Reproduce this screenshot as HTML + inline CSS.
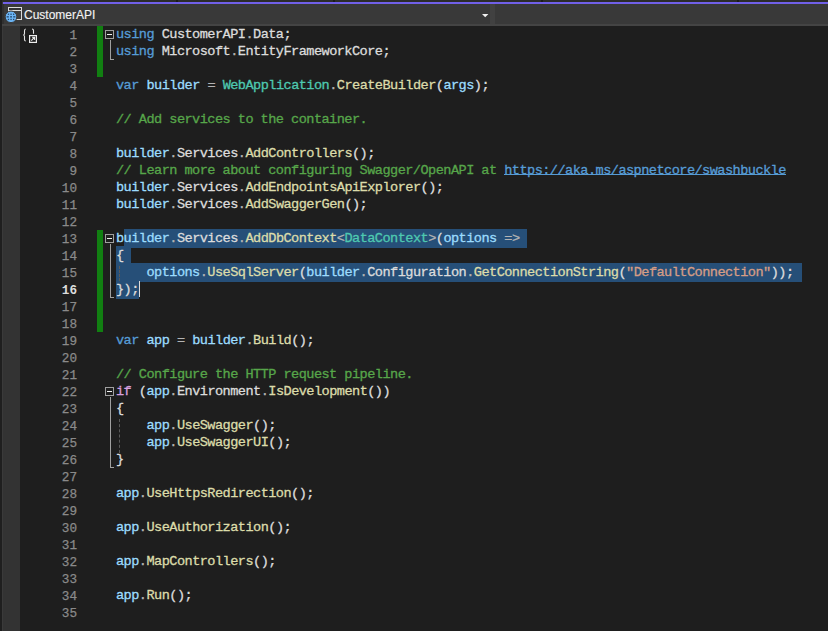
<!DOCTYPE html>
<html><head><meta charset="utf-8"><style>
html,body{margin:0;padding:0;}
body{width:828px;height:631px;position:relative;overflow:hidden;background:#1e1e1e;}
.abs{position:absolute;}
#topstrip{position:absolute;left:0;top:0;width:828px;height:2px;background:#2b2b2b;}
#leftstrip{position:absolute;left:0;top:0;width:2px;height:631px;background:#1f1f1f;}
#nav{position:absolute;left:2px;top:2px;width:826px;height:24px;background:#393939;}
#purple{position:absolute;left:3px;top:2px;width:825px;height:2px;background:#7160e8;}
#navbot{position:absolute;left:2px;top:24px;width:826px;height:2px;background:#444444;}
#sep{position:absolute;left:490px;top:4px;width:5px;height:20px;background:#414141;}
#margin{position:absolute;left:2px;top:26px;width:18px;height:605px;background:#333333;}
.title{position:absolute;left:24px;top:6px;font-family:"Liberation Sans",sans-serif;font-size:12px;line-height:18px;color:#f1f1f1;-webkit-text-stroke-width:0.15px;}
.ln{position:absolute;left:116px;height:17px;line-height:17px;font-family:"Liberation Mono",monospace;font-size:13.6px;letter-spacing:-0.546px;-webkit-text-stroke-width:0.3px;white-space:pre;padding-top:0px;box-sizing:border-box;}
.num{position:absolute;left:40px;width:37px;text-align:right;height:17px;line-height:17px;font-family:"Liberation Mono",monospace;font-size:12.7px;color:#8a8a8a;-webkit-text-stroke:0.25px #8a8a8a;padding-top:1px;box-sizing:border-box;}
.num.cur{color:#dcdcdc;-webkit-text-stroke:0;font-weight:bold;}
.lk{color:#569CD6;}
#ul{position:absolute;left:504px;top:174px;width:282px;height:1px;background:#569cd6;}
.sel{position:absolute;height:19px;background:#264f78;}
.green{position:absolute;left:97px;width:6px;background:#117f11;}
.fold{position:absolute;left:105px;width:7px;height:7px;border:1px solid #a0a0a0;}
.fold::after{content:"";position:absolute;left:1px;top:3px;width:5px;height:1px;background:#f0f0f0;}
.vl{position:absolute;left:110px;width:1px;background:#a0a0a0;}
.hl{position:absolute;left:110px;width:4px;height:1px;background:#a0a0a0;}
.guide{position:absolute;left:119px;width:0;border-left:1px dashed #5a5a5a;}
.tick{position:absolute;top:0;width:2px;height:2px;background:#1a1a1a;}
#caret{position:absolute;left:139px;top:281px;width:1px;height:16px;background:#dcdcdc;}
</style></head><body>
<div id="topstrip"></div>
<div id="nav"></div>
<div id="purple"></div>
<div id="navbot"></div>
<div id="sep"></div>
<div id="leftstrip"></div><div class="tick" style="left:176px"></div><div class="tick" style="left:333px"></div><div class="tick" style="left:541px"></div><div class="tick" style="left:737px"></div>
<svg class="abs" style="left:0;top:0" width="40" height="26" viewBox="0 0 40 26">
  <rect x="8.5" y="7.5" width="13" height="12" fill="#3f3f3f" stroke="#dcdcdc" stroke-width="1"/>
  <line x1="8.5" y1="10.5" x2="21.5" y2="10.5" stroke="#dcdcdc" stroke-width="1"/>
  <rect x="9" y="8" width="12" height="2" fill="#353535"/>
  <circle cx="11" cy="16.8" r="5.8" fill="#6cb6f7" stroke="#3b3b3b" stroke-width="1"/>
  <g fill="#24476b">
   <rect x="7.8" y="13.6" width="1.3" height="1.3"/><rect x="10.4" y="13.6" width="1.3" height="1.3"/><rect x="13" y="13.6" width="1.3" height="1.3"/>
   <rect x="6.6" y="16.2" width="2.2" height="1.3"/><rect x="10.1" y="16.2" width="1.9" height="1.3"/><rect x="13.2" y="16.2" width="2.2" height="1.3"/>
   <rect x="7.8" y="18.8" width="1.3" height="1.3"/><rect x="10.4" y="18.8" width="1.3" height="1.3"/><rect x="13" y="18.8" width="1.3" height="1.3"/>
  </g>
</svg>
<div class="title">CustomerAPI</div>
<svg class="abs" style="left:482px;top:13px" width="7" height="5" viewBox="0 0 7 5"><path d="M0 1H6.4L3.2 4.2Z" fill="#f0f0f0"/></svg>
<div id="margin"></div><div class="abs" style="left:2px;top:26px;width:1px;height:605px;background:#3a3a3a"></div><div class="abs" style="left:2px;top:4px;width:2px;height:20px;background:#303030"></div>
<svg class="abs" style="left:20px;top:26px" width="20" height="20" viewBox="0 0 20 20">
  <path d="M5.8 3 C4.7 3 4.5 3.8 4.5 5 V7.6 C4.5 8.6 4.1 9 3.2 9 C4.1 9 4.5 9.4 4.5 10.4 V13.4 C4.5 14.5 4.8 15 5.8 15" fill="none" stroke="#e6e6e6" stroke-width="1.1"/>
  <path d="M12 3 C13.1 3 13.5 3.5 13.5 4.6 V7.7" fill="none" stroke="#e6e6e6" stroke-width="1.1"/>
  <rect x="9.6" y="9.6" width="6.8" height="6.8" fill="#1e1e1e" stroke="#ececec" stroke-width="1.2"/>
  <path d="M11.3 14.6 L14.4 11.5 M12 11.3 H14.6 V13.9" fill="none" stroke="#e8e8e8" stroke-width="1.1"/>
</svg>
<div class="num" style="top:26px">1</div><div class="num" style="top:43px">2</div><div class="num" style="top:60px">3</div><div class="num" style="top:77px">4</div><div class="num" style="top:94px">5</div><div class="num" style="top:111px">6</div><div class="num" style="top:128px">7</div><div class="num" style="top:145px">8</div><div class="num" style="top:162px">9</div><div class="num" style="top:179px">10</div><div class="num" style="top:196px">11</div><div class="num" style="top:213px">12</div><div class="num" style="top:230px">13</div><div class="num" style="top:247px">14</div><div class="num" style="top:264px">15</div><div class="num cur" style="top:281px">16</div><div class="num" style="top:298px">17</div><div class="num" style="top:315px">18</div><div class="num" style="top:332px">19</div><div class="num" style="top:349px">20</div><div class="num" style="top:366px">21</div><div class="num" style="top:383px">22</div><div class="num" style="top:400px">23</div><div class="num" style="top:417px">24</div><div class="num" style="top:434px">25</div><div class="num" style="top:451px">26</div><div class="num" style="top:468px">27</div><div class="num" style="top:485px">28</div><div class="num" style="top:502px">29</div><div class="num" style="top:519px">30</div><div class="num" style="top:536px">31</div><div class="num" style="top:553px">32</div><div class="num" style="top:570px">33</div><div class="num" style="top:587px">34</div><div class="num" style="top:604px">35</div>
<div class="green" style="top:26px;height:51px"></div>
<div class="green" style="top:230px;height:102px"></div>
<div class="sel" style="left:123.61px;top:229px;width:403.53px"></div><div class="sel" style="left:116.00px;top:246px;width:15.23px"></div><div class="sel" style="left:116.00px;top:263px;width:686.00px"></div><div class="sel" style="left:116.00px;top:280px;width:22.84px"></div>
<div class="fold" style="top:30px"></div>
<div class="vl" style="top:40px;height:20px"></div><div class="hl" style="top:59px"></div>
<div class="fold" style="top:234px"></div>
<div class="vl" style="top:244px;height:54px"></div><div class="hl" style="top:297px"></div>
<div class="fold" style="top:387px"></div>
<div class="vl" style="top:397px;height:71px"></div><div class="hl" style="top:467px"></div>
<div class="guide" style="top:266px;height:15px"></div>
<div class="guide" style="top:419px;height:34px"></div>
<div class="ln" style="top:26px"><span style="color:#569CD6">using</span><span style="color:#DCDCDC"> CustomerAPI</span><span style="color:#B4B4B4">.</span><span style="color:#DCDCDC">Data;</span></div><div class="ln" style="top:43px"><span style="color:#569CD6">using</span><span style="color:#DCDCDC"> Microsoft</span><span style="color:#B4B4B4">.</span><span style="color:#DCDCDC">EntityFrameworkCore;</span></div><div class="ln" style="top:60px"></div><div class="ln" style="top:77px"><span style="color:#569CD6">var</span><span style="color:#DCDCDC"> </span><span style="color:#9CDCFE">builder</span><span style="color:#DCDCDC"> </span><span style="color:#B4B4B4">=</span><span style="color:#DCDCDC"> </span><span style="color:#4EC9B0">WebApplication</span><span style="color:#B4B4B4">.</span><span style="color:#DCDCAA">CreateBuilder</span><span style="color:#DCDCDC">(</span><span style="color:#9CDCFE">args</span><span style="color:#DCDCDC">);</span></div><div class="ln" style="top:94px"></div><div class="ln" style="top:111px"><span style="color:#57A64A">// Add services to the container.</span></div><div class="ln" style="top:128px"></div><div class="ln" style="top:145px"><span style="color:#9CDCFE">builder</span><span style="color:#B4B4B4">.</span><span style="color:#DCDCDC">Services</span><span style="color:#B4B4B4">.</span><span style="color:#DCDCAA">AddControllers</span><span style="color:#DCDCDC">();</span></div><div class="ln" style="top:162px"><span style="color:#57A64A">// Learn more about configuring Swagger/OpenAPI at </span><span class="lk">https://aka.ms/aspnetcore/swashbuckle</span></div><div class="ln" style="top:179px"><span style="color:#9CDCFE">builder</span><span style="color:#B4B4B4">.</span><span style="color:#DCDCDC">Services</span><span style="color:#B4B4B4">.</span><span style="color:#DCDCAA">AddEndpointsApiExplorer</span><span style="color:#DCDCDC">();</span></div><div class="ln" style="top:196px"><span style="color:#9CDCFE">builder</span><span style="color:#B4B4B4">.</span><span style="color:#DCDCDC">Services</span><span style="color:#B4B4B4">.</span><span style="color:#DCDCAA">AddSwaggerGen</span><span style="color:#DCDCDC">();</span></div><div class="ln" style="top:213px"></div><div class="ln" style="top:230px"><span style="color:#9CDCFE">builder</span><span style="color:#B4B4B4">.</span><span style="color:#DCDCDC">Services</span><span style="color:#B4B4B4">.</span><span style="color:#DCDCAA">AddDbContext</span><span style="color:#B4B4B4">&lt;</span><span style="color:#4EC9B0">DataContext</span><span style="color:#B4B4B4">&gt;</span><span style="color:#DCDCDC">(</span><span style="color:#9CDCFE">options</span><span style="color:#DCDCDC"> </span><span style="color:#B4B4B4">=&gt;</span></div><div class="ln" style="top:247px"><span style="color:#DCDCDC">{</span></div><div class="ln" style="top:264px"><span style="color:#DCDCDC">    </span><span style="color:#9CDCFE">options</span><span style="color:#B4B4B4">.</span><span style="color:#DCDCAA">UseSqlServer</span><span style="color:#DCDCDC">(</span><span style="color:#9CDCFE">builder</span><span style="color:#B4B4B4">.</span><span style="color:#DCDCDC">Configuration</span><span style="color:#B4B4B4">.</span><span style="color:#DCDCAA">GetConnectionString</span><span style="color:#DCDCDC">(</span><span style="color:#D69D85">"DefaultConnection"</span><span style="color:#DCDCDC">));</span></div><div class="ln" style="top:281px"><span style="color:#DCDCDC">});</span></div><div class="ln" style="top:298px"></div><div class="ln" style="top:315px"></div><div class="ln" style="top:332px"><span style="color:#569CD6">var</span><span style="color:#DCDCDC"> </span><span style="color:#9CDCFE">app</span><span style="color:#DCDCDC"> </span><span style="color:#B4B4B4">=</span><span style="color:#DCDCDC"> </span><span style="color:#9CDCFE">builder</span><span style="color:#B4B4B4">.</span><span style="color:#DCDCAA">Build</span><span style="color:#DCDCDC">();</span></div><div class="ln" style="top:349px"></div><div class="ln" style="top:366px"><span style="color:#57A64A">// Configure the HTTP request pipeline.</span></div><div class="ln" style="top:383px"><span style="color:#D8A0DF">if</span><span style="color:#DCDCDC"> (</span><span style="color:#9CDCFE">app</span><span style="color:#B4B4B4">.</span><span style="color:#DCDCDC">Environment</span><span style="color:#B4B4B4">.</span><span style="color:#DCDCAA">IsDevelopment</span><span style="color:#DCDCDC">())</span></div><div class="ln" style="top:400px"><span style="color:#DCDCDC">{</span></div><div class="ln" style="top:417px"><span style="color:#DCDCDC">    </span><span style="color:#9CDCFE">app</span><span style="color:#B4B4B4">.</span><span style="color:#DCDCAA">UseSwagger</span><span style="color:#DCDCDC">();</span></div><div class="ln" style="top:434px"><span style="color:#DCDCDC">    </span><span style="color:#9CDCFE">app</span><span style="color:#B4B4B4">.</span><span style="color:#DCDCAA">UseSwaggerUI</span><span style="color:#DCDCDC">();</span></div><div class="ln" style="top:451px"><span style="color:#DCDCDC">}</span></div><div class="ln" style="top:468px"></div><div class="ln" style="top:485px"><span style="color:#9CDCFE">app</span><span style="color:#B4B4B4">.</span><span style="color:#DCDCAA">UseHttpsRedirection</span><span style="color:#DCDCDC">();</span></div><div class="ln" style="top:502px"></div><div class="ln" style="top:519px"><span style="color:#9CDCFE">app</span><span style="color:#B4B4B4">.</span><span style="color:#DCDCAA">UseAuthorization</span><span style="color:#DCDCDC">();</span></div><div class="ln" style="top:536px"></div><div class="ln" style="top:553px"><span style="color:#9CDCFE">app</span><span style="color:#B4B4B4">.</span><span style="color:#DCDCAA">MapControllers</span><span style="color:#DCDCDC">();</span></div><div class="ln" style="top:570px"></div><div class="ln" style="top:587px"><span style="color:#9CDCFE">app</span><span style="color:#B4B4B4">.</span><span style="color:#DCDCAA">Run</span><span style="color:#DCDCDC">();</span></div><div class="ln" style="top:604px"></div>
<div id="caret"></div>
<div id="ul"></div>
</body></html>
